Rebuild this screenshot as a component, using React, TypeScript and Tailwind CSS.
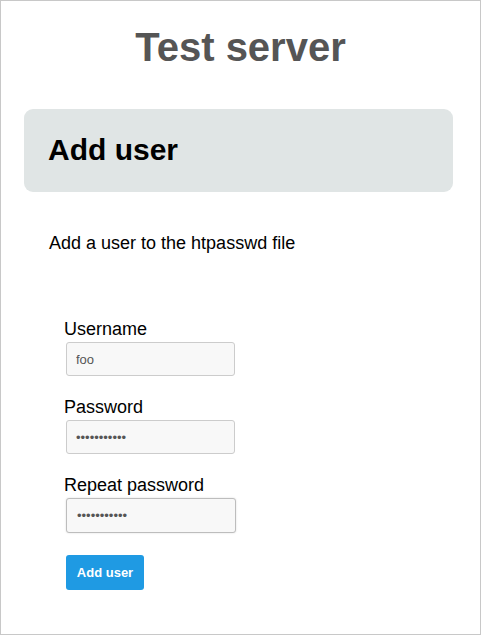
import React, { useEffect, useRef } from "react";

const Field = ({
  label,
  type,
  value,
  focused,
}: {
  label: string;
  type: string;
  value: string;
  focused?: boolean;
}) => {
  const ref = useRef<HTMLInputElement>(null);

  useEffect(() => {
    if (focused && ref.current) {
      ref.current.focus();
      ref.current.setSelectionRange(value.length, value.length);
    }
  }, [focused, value]);

  return (
    <div className="flex flex-col">
      <label className="text-[18px] leading-[22px] text-black">{label}</label>
      <input
        ref={ref}
        type={type}
        defaultValue={value}
        className={
          focused
            ? "mt-[2px] ml-[2px] h-[35px] w-[170px] rounded-[3px] border border-[#bdbdbd] bg-[#f8f8f8] pl-[10px] text-[13px] text-[#555] shadow-[0_0_2px_rgba(0,0,0,0.15)] outline-none"
            : "mt-[2px] ml-[2px] h-[34px] w-[169px] rounded-[3px] border border-[#cccccc] bg-[#f8f8f8] pl-[9px] text-[13px] text-[#555] outline-none"
        }
      />
    </div>
  );
};

export default function App() {
  return (
    <div className="h-[635px] w-[481px] border border-[#c8c8c8] bg-white font-['Liberation_Sans',Arial,sans-serif]">
      <h1 className="pt-[22px] text-center text-[40px] leading-[48px] font-bold text-[#555555]">
        Test server
      </h1>

      {/* page heading panel */}
      <div className="mt-[38px] ml-[23px] w-[429px] rounded-[9px] bg-[#e0e5e5] pt-[21px] pb-[22px] pl-[24px]">
        <h2 className="text-[30px] leading-[40px] font-bold text-black">Add user</h2>
      </div>

      <p className="mt-[40px] ml-[48px] text-[18px] leading-[22px] text-black">
        Add a user to the htpasswd file
      </p>

      <form className="mt-[64px] ml-[63px] flex flex-col gap-[20px]" onSubmit={(e) => e.preventDefault()}>
        <Field label="Username" type="text" value="foo" />
        <Field label="Password" type="password" value="secretsecre" />
        <Field label="Repeat password" type="password" value="secretsecre" focused />
        <div className="mt-[2px]">
          <button
            type="submit"
            className="ml-[2px] h-[35px] w-[78px] rounded-[3px] bg-[#1f9ae3] text-[13px] font-bold text-white"
          >
            Add user
          </button>
        </div>
      </form>
    </div>
  );
}
